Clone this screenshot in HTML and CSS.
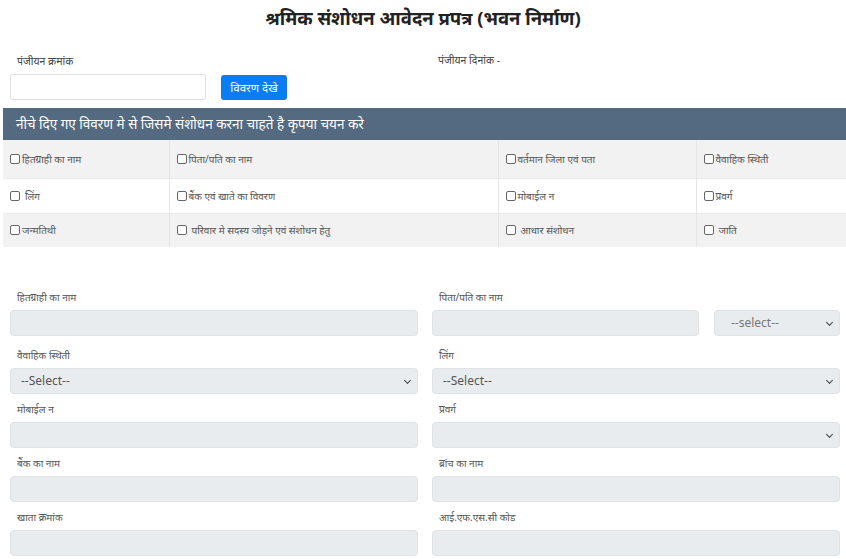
FILE: index.html
```html
<!DOCTYPE html>
<html lang="hi">
<head>
<meta charset="utf-8">
<link rel="stylesheet" href="styles.css">
</head>
<body>
<h1 class="title">श्रमिक संशोधन आवेदन प्रपत्र (भवन निर्माण)</h1>

<div class="search">
  <div class="search-col">
    <div class="small-label">पंजीयन क्रमांक</div>
    <div class="search-row">
      <input class="reg-input" type="text">
      <button class="btn">विवरण देखे</button>
    </div>
  </div>
  <div class="search-col right">
    <div class="small-label">पंजीयन दिनांक -</div>
  </div>
</div>

<div class="bar">नीचे दिए गए विवरण मे से जिसमे संशोधन करना चाहते है कृपया चयन करे</div>
<table class="choices">
  <tr class="striped">
    <td class="c1"><label><span class="cb"></span>हितग्राही का नाम</label></td>
    <td class="c2"><label><span class="cb"></span>पिता/पति का नाम</label></td>
    <td class="c3"><label><span class="cb"></span>वर्तमान जिला एवं पता</label></td>
    <td class="c4"><label><span class="cb"></span>वैवाहिक स्थिती</label></td>
  </tr>
  <tr>
    <td><label><span class="cb sp"></span>लिंग</label></td>
    <td><label><span class="cb"></span>बैंक एवं खाते का विवरण</label></td>
    <td><label><span class="cb"></span>मोबाईल न</label></td>
    <td><label><span class="cb"></span>प्रवर्ग</label></td>
  </tr>
  <tr class="striped">
    <td><label><span class="cb"></span>जन्मतिथी</label></td>
    <td><label><span class="cb sp"></span> परिवार मे सदस्य जोड़ने एवं संशोधन हेतु</label></td>
    <td><label><span class="cb sp"></span> आधार संशोधन</label></td>
    <td><label><span class="cb sp"></span> जाति</label></td>
  </tr>
</table>

<div class="form">
  <div class="field first">
    <div class="flabel">हितग्राही का नाम</div>
    <div class="ctrl"></div>
  </div>
  <div class="field first">
    <div class="flabel">पिता/पति का नाम</div>
    <div class="pair">
      <div class="ctrl grow"></div>
      <div class="ctrl sel small">--select--<span class="chev"></span></div>
    </div>
  </div>
  <div class="field">
    <div class="flabel">वैवाहिक स्थिती</div>
    <div class="ctrl sel">--Select--<span class="chev"></span></div>
  </div>
  <div class="field">
    <div class="flabel">लिंग</div>
    <div class="ctrl sel">--Select--<span class="chev"></span></div>
  </div>
  <div class="field">
    <div class="flabel">मोबाईल न</div>
    <div class="ctrl"></div>
  </div>
  <div class="field">
    <div class="flabel">प्रवर्ग</div>
    <div class="ctrl sel"><span class="chev"></span></div>
  </div>
  <div class="field">
    <div class="flabel">बैंक का नाम</div>
    <div class="ctrl"></div>
  </div>
  <div class="field">
    <div class="flabel">ब्रांच का नाम</div>
    <div class="ctrl"></div>
  </div>
  <div class="field">
    <div class="flabel">खाता क्रमांक</div>
    <div class="ctrl"></div>
  </div>
  <div class="field">
    <div class="flabel">आई.एफ.एस.सी कोड</div>
    <div class="ctrl"></div>
  </div>
</div>
</body>
</html>
```

FILE: styles.css
```css
* { box-sizing: border-box; }
html, body { margin: 0; padding: 0; background: #fff; }
body {
  width: 846px;
  height: 559px;
  overflow: hidden;
  font-family: "Noto Sans", "Noto Sans Devanagari", "Lohit Devanagari", sans-serif;
  color: #333;
}
.title {
  margin: 0;
  padding-top: 5px;
  height: 48px;
  text-align: center;
  font-size: 18.5px;
  font-weight: 700;
  color: #222;
  line-height: 26px;
}
.search {
  display: flex;
  height: 60px;
}
.search-col {
  width: 423px;
  padding-left: 10px;
}
.search-col.right { padding-left: 15px; }
.small-label {
  font-size: 10.5px;
  color: #444;
  padding-left: 7px;
  height: 26px;
  line-height: 27px;
}
.search-col.right .small-label { padding-left: 0; line-height: 25px; }
.search-row {
  display: flex;
  gap: 15px;
  align-items: center;
}
.reg-input {
  width: 196px;
  height: 26px;
  border: 1px solid #dcdfe3;
  border-radius: 3px;
  background: #fff;
  margin: 0;
}
.btn {
  width: 66px;
  height: 25px;
  border: none;
  border-radius: 3px;
  background: #0a7cf4;
  color: #fff;
  font-family: inherit;
  font-size: 11.5px;
  padding: 0;
}
.bar {
  margin-left: 3px;
  height: 32px;
  background: #536a80;
  color: #fff;
  font-size: 13.5px;
  line-height: 32px;
  padding-left: 13px;
}
.choices {
  margin-left: 3px;
  width: 843px;
  border-collapse: collapse;
  font-size: 10px;
  color: #555;
}
.choices td {
  border-left: 1px solid #e3e5e8;
  border-top: 1px solid #e9ebee;
  padding: 0 0 0 7px;
  height: 35px;
  vertical-align: middle;
}
.choices tr:first-child td { border-top: none; height: 38px; }
.choices tr:last-child td { height: 34px; }
.choices td:first-child { border-left: none; }
.choices .c1 { width: 166px; }
.choices .c2 { width: 329px; }
.choices .c3 { width: 198px; }
.striped { background: #f2f2f2; }
.choices label { display: flex; align-items: center; }
.cb {
  display: inline-block;
  width: 10px;
  height: 10px;
  border: 1px solid #666;
  border-radius: 2px;
  background: #fff;
  margin-right: 2px;
  flex: none;
}
.cb.sp { margin-right: 5px; }
.form {
  display: grid;
  grid-template-columns: 408px 408px;
  column-gap: 14px;
  padding-left: 10px;
  margin-top: 38px;
}
.field { height: 54px; }
.field.first { height: 58px; }
.flabel {
  font-size: 10px;
  color: #555;
  padding-left: 7px;
  height: 25px;
  line-height: 24px;
}
.ctrl {
  height: 26px;
  background: #e9ecef;
  border: 1px solid #dfe2e6;
  border-radius: 4px;
  position: relative;
  font-size: 12px;
  color: #555;
  line-height: 24px;
  padding-left: 10px;
}
.pair { display: flex; gap: 15px; }
.grow { width: 267px; }
.sel.small { width: 126px; padding-left: 16px; color: #777; }
.chev {
  position: absolute;
  right: 7px;
  top: 9px;
  width: 5px;
  height: 5px;
  border-right: 1.5px solid #444;
  border-bottom: 1.5px solid #444;
  transform: rotate(45deg);
}
```
